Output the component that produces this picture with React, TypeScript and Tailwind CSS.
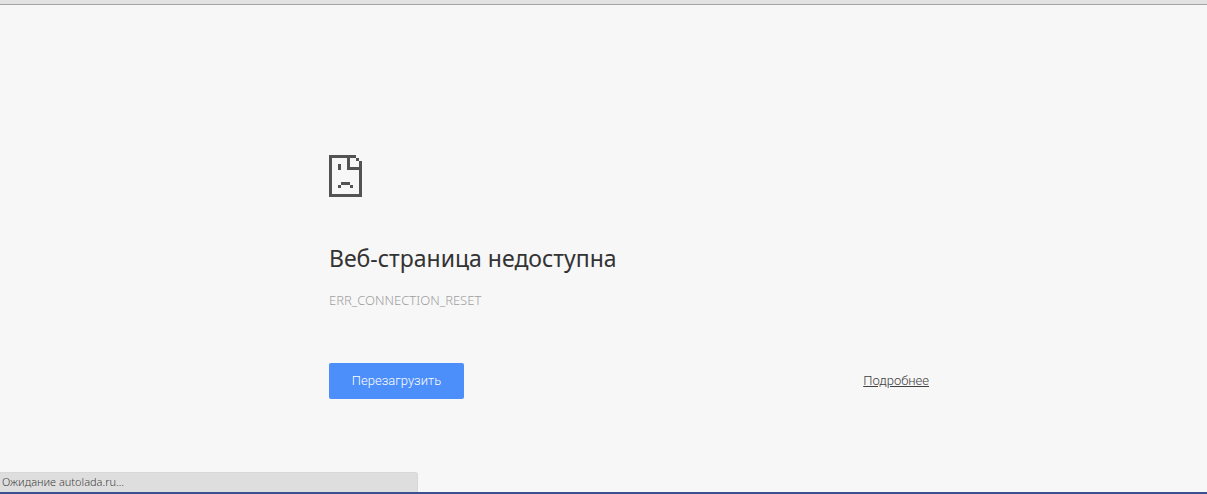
const SadPageIcon = () => (
  <svg width="33" height="42" viewBox="0 0 11 14" fill="#535353" shapeRendering="crispEdges" aria-hidden="true">
    {/* sheet outline with the folded corner */}
    <path d="M0 0h9v1h-2v3h3V2h1v12H0zM1 1v12h9V5H6V1z" fillRule="evenodd" />
    <path d="M9 1h1v1H9z" />
    {/* face */}
    <path d="M3 3h1v2H3zM4 9h3v1H4zM3 10h1v1H3zM7 10h1v1H7z" />
  </svg>
);

export default function App() {
  const reload = () => window.location.reload();

  return (
    <div className="flex min-h-screen w-full flex-col bg-[#f7f7f7] font-['Noto_Sans',sans-serif] text-[#646464]">
      {/* bottom edge of the toolbar */}
      <div className="h-[5px] w-full border-b border-[#a5a5a5] bg-[#e2e2e2]" />

      <main className="flex w-full flex-1 flex-col items-center pl-[51px] pt-[150px]">
        <div className="w-full max-w-[600px]">
          <SadPageIcon />
          <h1 className="mt-[43px] text-[23px] leading-[36px] text-[#333333]">Веб-страница недоступна</h1>
          <p className="mt-[16px] text-[13px] font-light leading-[16px] text-[#a0a0a0]">ERR_CONNECTION_RESET</p>

          <div className="mt-[55px] flex items-center justify-between font-['Roboto',sans-serif] text-[13px] font-light">
            <button onClick={reload} className="h-9 w-[135px] rounded-[2px] bg-[#4c8efa] text-white">
              Перезагрузить
            </button>
            <a href="#details" className="text-[#404040] underline">
              Подробнее
            </a>
          </div>
        </div>
      </main>

      {/* status bubble */}
      <footer className="w-full border-b-2 border-[#3b5091]">
        <div className="h-5 w-[418px] rounded-tr-[3px] border-r border-t border-[#d8d8d8] bg-[#dedede] pl-[2px] text-[11px] font-light leading-[18px] text-[#404040]">
          Ожидание autolada.ru…
        </div>
      </footer>
    </div>
  );
}
